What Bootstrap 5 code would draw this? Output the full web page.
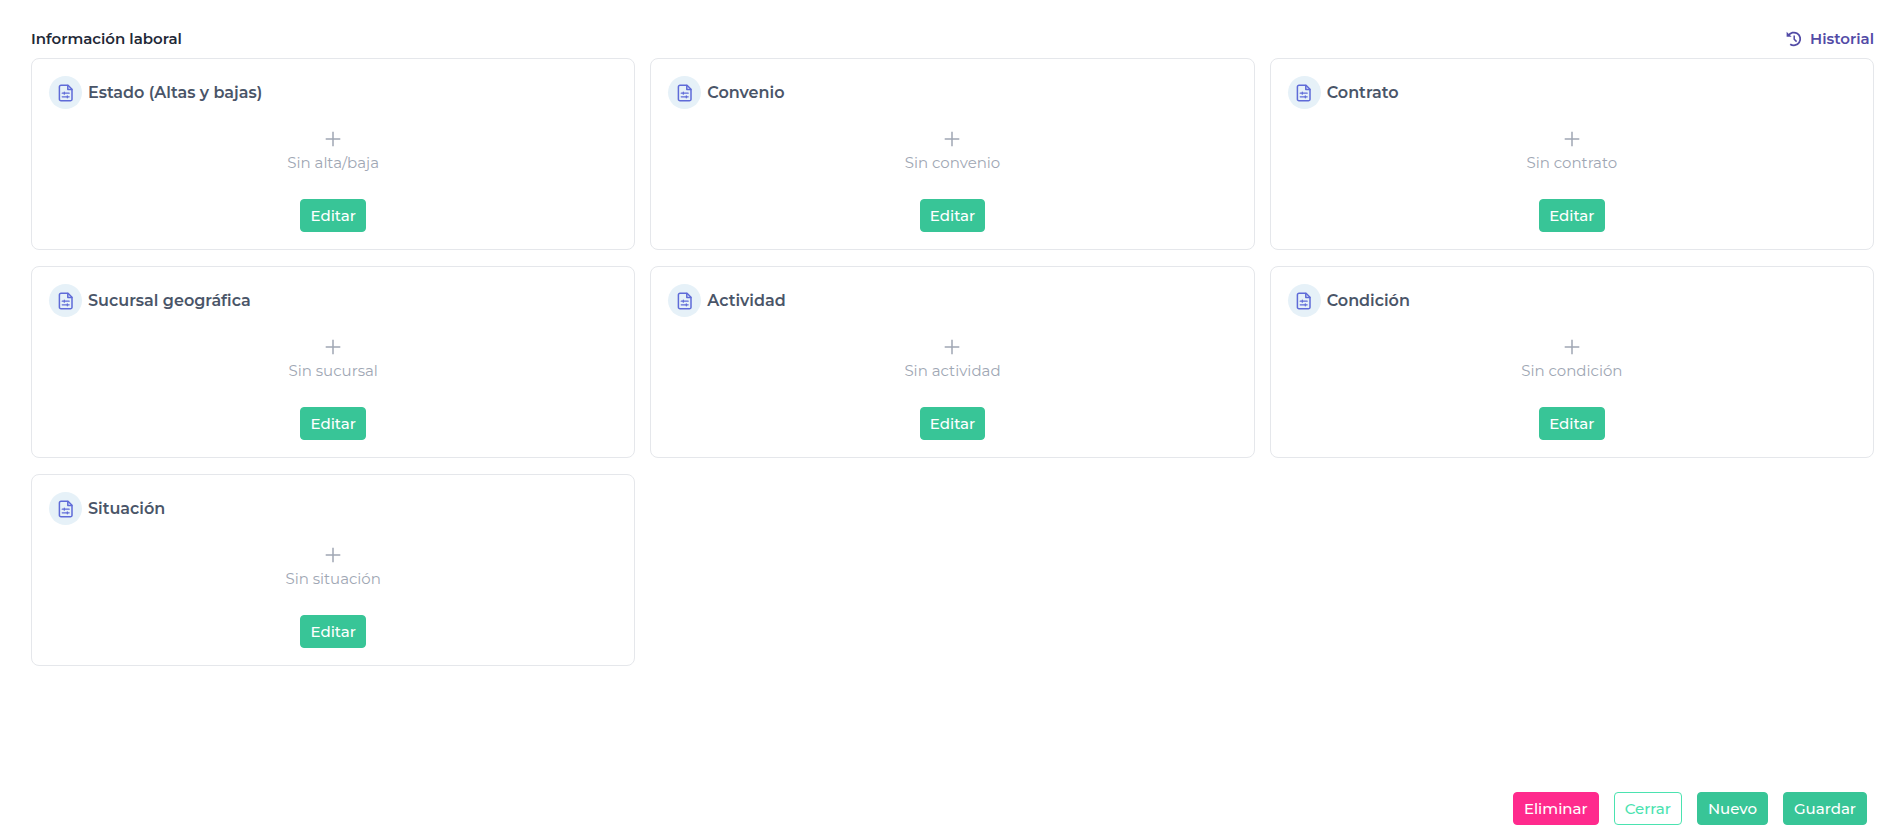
<!DOCTYPE html>
<html lang="es">
<head>
<meta charset="utf-8">
<meta name="viewport" content="width=device-width, initial-scale=1">
<title>Información laboral</title>
<link href="https://cdn.jsdelivr.net/npm/bootstrap@5.3.0/dist/css/bootstrap.min.css" rel="stylesheet">
<style>
body{font-family:Montserrat,Inter,"Open Sans",sans-serif;font-size:15px;line-height:24px;background:#fff}
.page{padding:27px 17px 11px 31px}
.top-bar{margin-bottom:7px}
.heading{font-size:15px;line-height:24px;font-weight:600;color:#1f2937}
.history{font-weight:600;color:#524ba6}
.cards{--bs-gutter-x:15px;--bs-gutter-y:0}
.info-card{--bs-card-border-color:#e5e7eb;--bs-card-border-radius:8px;--bs-card-spacer-x:17px;--bs-card-spacer-y:17px;min-height:192px}
.card-head{gap:6px}
.doc-icon{width:33px;height:33px;background:#e6f1f8;color:#5f6bd8}
.card-name{font-size:16px;line-height:24px;font-weight:600;color:#4a5568}
.empty-note{color:#a0a7b4;line-height:24px}
.btn-app{--bs-btn-font-size:15px;--bs-btn-line-height:23px;--bs-btn-padding-x:9px;--bs-btn-padding-y:4px;--bs-btn-border-radius:4px;--bs-btn-font-weight:500}
.btn-green{--bs-btn-color:#fff;--bs-btn-bg:#38c597;--bs-btn-border-color:#38c597;--bs-btn-hover-color:#fff;--bs-btn-hover-bg:#2fae85;--bs-btn-hover-border-color:#2fae85}
.btn-pink{--bs-btn-color:#fff;--bs-btn-bg:#ff2a8d;--bs-btn-border-color:#ff2a8d;--bs-btn-hover-color:#fff;--bs-btn-hover-bg:#e01f79;--bs-btn-hover-border-color:#e01f79}
.btn-line{--bs-btn-color:#4be3b0;--bs-btn-bg:#fff;--bs-btn-border-color:#4be3b0;--bs-btn-hover-color:#fff;--bs-btn-hover-bg:#4be3b0;--bs-btn-hover-border-color:#4be3b0}
.actions{gap:15px;padding-right:7px}
.actions .btn-app{--bs-btn-padding-x:10px}
</style>
</head>
<body>
<svg class="d-none" aria-hidden="true">
<symbol id="doc" viewBox="0 0 16 18"><g fill="none" stroke="currentColor" stroke-width="1.5" stroke-linejoin="round" stroke-linecap="round"><path d="M3 1.2h7l4 4v10a1.6 1.6 0 0 1-1.6 1.6H3a1.6 1.6 0 0 1-1.6-1.6V2.8A1.6 1.6 0 0 1 3 1.2z"/><path d="M9.8 1.4v4h4" /><path d="M4.2 9.2h7M4.2 12.8h7" stroke-width="1.2"/><path d="M6.3 8.2v2M9.3 11.8v2" stroke-width="1.2"/></g></symbol>
<symbol id="plus" viewBox="0 0 16 16"><path d="M8 .7v14.6M.7 8h14.6" fill="none" stroke="currentColor" stroke-width="1.5"/></symbol>
</svg>
<main class="page d-flex flex-column min-vh-100">
<header class="top-bar d-flex justify-content-between">
<h1 class="heading mb-0">Información laboral</h1>
<a href="#" class="history d-flex gap-2 text-decoration-none"><svg width="16" height="16" viewBox="0 0 16 16" class="mt-1" fill="none" stroke="currentColor" stroke-width="1.8" aria-hidden="true"><path d="M2.4 4.6A6.4 6.4 0 1 1 4.2 13.2"/><path d="M.6.8v5h5z" fill="currentColor" stroke="none"/><path d="M8.2 4.4v3.8l2.4 2.4" stroke-width="1.5"/></svg>Historial</a>
</header>
<section class="cards row row-cols-3" id="cards"></section>
<footer class="actions d-flex justify-content-end mt-auto pt-4">
<button type="button" class="btn btn-app btn-pink">Eliminar</button>
<button type="button" class="btn btn-app btn-line">Cerrar</button>
<button type="button" class="btn btn-app btn-green">Nuevo</button>
<button type="button" class="btn btn-app btn-green">Guardar</button>
</footer>
</main>
<script src="https://cdn.jsdelivr.net/npm/bootstrap@5.3.0/dist/js/bootstrap.bundle.min.js"></script>
<script>
const items=[["Estado (Altas y bajas)","Sin alta/baja"],["Convenio","Sin convenio"],["Contrato","Sin contrato"],["Sucursal geográfica","Sin sucursal"],["Actividad","Sin actividad"],["Condición","Sin condición"],["Situación","Sin situación"]];
document.getElementById("cards").innerHTML=items.map(([name,note])=>`
<div class="col mb-3"><article class="card info-card"><div class="card-body d-flex flex-column">
<div class="card-head d-flex align-items-center"><span class="doc-icon rounded-circle d-inline-flex align-items-center justify-content-center"><svg width="16" height="18" aria-hidden="true"><use href="#doc"/></svg></span><h2 class="card-name mb-0">${name}</h2></div>
<div class="empty-note d-flex flex-column align-items-center mt-auto mb-4"><svg width="16" height="16" class="mb-1" aria-hidden="true"><use href="#plus"/></svg><span>${note}</span></div>
<button type="button" class="btn btn-app btn-green align-self-center">Editar</button>
</div></article></div>`).join("");
</script>
</body>
</html>
